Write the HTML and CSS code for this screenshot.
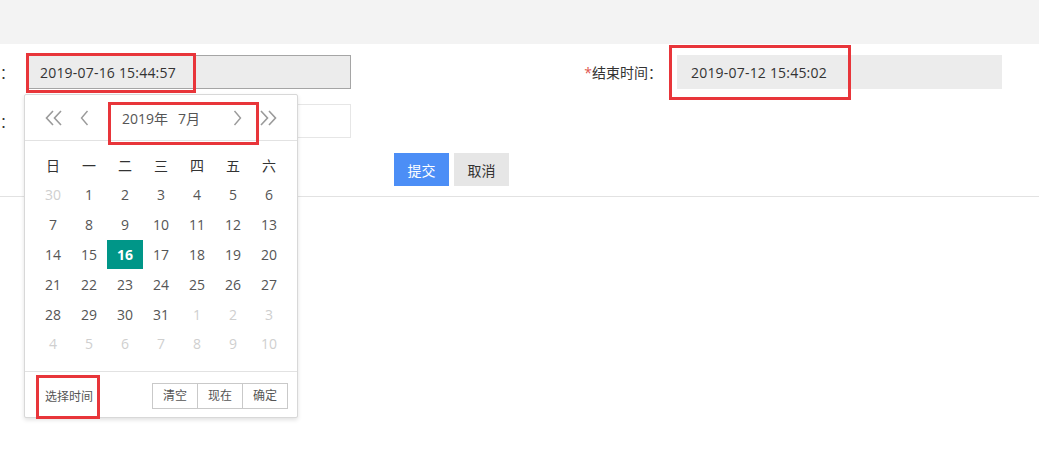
FILE: index.html
```html
<!DOCTYPE html>
<html lang="zh-CN">
<head>
<meta charset="utf-8">
<title>时间选择</title>
<link rel="stylesheet" href="styles.css">
</head>
<body>
<div class="topbar"></div>
<form class="form">
  <div class="row">
    <div class="field">
      <label class="label label-left">：</label>
      <div class="input input-focus">2019-07-16 15:44:57</div>
    </div>
    <div class="field field-right">
      <label class="label label-right"><span class="req">*</span>结束时间：</label>
      <div class="input">2019-07-12 15:45:02</div>
    </div>
  </div>
  <div class="row row2">
    <div class="field">
      <label class="label label-left">：</label>
      <div class="input input-empty"></div>
    </div>
  </div>
  <div class="actions">
    <button type="button" class="btn btn-primary">提交</button>
    <button type="button" class="btn btn-default">取消</button>
  </div>
</form>
<div class="divider"></div>

<div class="laydate">
  <div class="ld-header">
    <div class="ld-group">
      <svg class="ico ico-dbl" width="18" height="16" viewBox="0 0 18 16"><path d="M8 1 L1.5 8 L8 15 M16 1 L9.5 8 L16 15" fill="none" stroke="#9a9a9a" stroke-width="1.6"/></svg>
      <svg class="ico ico-one" width="9" height="16" viewBox="0 0 9 16"><path d="M7.5 1 L1.5 8 L7.5 15" fill="none" stroke="#9a9a9a" stroke-width="1.4"/></svg>
    </div>
    <div class="ld-ym"><span>2019年</span><span>7月</span></div>
    <div class="ld-group">
      <svg class="ico ico-one-r" width="9" height="16" viewBox="0 0 9 16"><path d="M1.5 1 L7.5 8 L1.5 15" fill="none" stroke="#9a9a9a" stroke-width="1.4"/></svg>
      <svg class="ico ico-dbl-r" width="18" height="16" viewBox="0 0 18 16"><path d="M2 1 L8.5 8 L2 15 M10 1 L16.5 8 L10 15" fill="none" stroke="#9a9a9a" stroke-width="1.6"/></svg>
    </div>
  </div>
  <div class="ld-content">
    <table class="ld-table">
      <thead><tr><th>日</th><th>一</th><th>二</th><th>三</th><th>四</th><th>五</th><th>六</th></tr></thead>
      <tbody>
        <tr><td class="other">30</td><td>1</td><td>2</td><td>3</td><td>4</td><td>5</td><td>6</td></tr>
        <tr><td>7</td><td>8</td><td>9</td><td>10</td><td>11</td><td>12</td><td>13</td></tr>
        <tr><td>14</td><td>15</td><td class="this">16</td><td>17</td><td>18</td><td>19</td><td>20</td></tr>
        <tr><td>21</td><td>22</td><td>23</td><td>24</td><td>25</td><td>26</td><td>27</td></tr>
        <tr><td>28</td><td>29</td><td>30</td><td>31</td><td class="other">1</td><td class="other">2</td><td class="other">3</td></tr>
        <tr><td class="other">4</td><td class="other">5</td><td class="other">6</td><td class="other">7</td><td class="other">8</td><td class="other">9</td><td class="other">10</td></tr>
      </tbody>
    </table>
  </div>
  <div class="ld-footer">
    <span class="ld-time">选择时间</span>
    <div class="ld-btns">
      <span class="ld-btn">清空</span><span class="ld-btn">现在</span><span class="ld-btn">确定</span>
    </div>
  </div>
</div>

<div class="mark mark-1"></div>
<div class="mark mark-2"></div>
<div class="mark mark-3"></div>
<div class="mark mark-4"></div>
</body>
</html>
```

FILE: styles.css
```css
* { box-sizing: border-box; }
html, body { margin: 0; padding: 0; background: #fff; overflow: hidden; }
body {
  font-family: "Open Sans", "Noto Sans CJK SC", sans-serif;
  font-size: 14px;
  color: #333;
  position: relative;
  width: 1039px;
  height: 458px;
}
.topbar { height: 44px; background: #f3f3f3; }
.form { padding-top: 11px; }
.row { display: flex; height: 34px; }
.row2 { margin-top: 15px; }
.field { display: flex; height: 34px; }
.field-right { margin-left: 216px; }
.label {
  display: flex;
  align-items: center;
  justify-content: flex-end;
  white-space: nowrap;
  padding-right: 15px;
  color: #333;
}
.label-left { width: 29px; margin-left: -3px; padding-right: 12px; }
.label-right { width: 110px; }
.req { color: #e0564f; }
.input {
  width: 325px;
  height: 34px;
  line-height: 34px;
  padding-left: 13px;
  background: #ececec;
  color: #333;
  letter-spacing: 0.2px;
  border: 1px solid transparent;
}
.input-focus { border-color: #a5a5a5; }
.input-empty { background: #fff; border-color: #e6e6e6; }
.actions { margin-top: 15px; padding-left: 394px; display: flex; gap: 5px; }
.btn {
  font-family: inherit;
  font-size: 14px;
  height: 33px;
  width: 55px;
  border: 0;
  padding: 0;
  margin: 0;
}
.btn-primary { background: #4c8ef6; color: #fff; }
.btn-default { background: #e6e6e6; color: #333; }
.divider { margin-top: 10px; height: 1px; background: #e2e2e2; }

/* laydate popup */
.laydate {
  position: absolute;
  left: 24px;
  top: 94px;
  width: 274px;
  background: #fff;
  border: 1px solid #d8d8d8;
  box-shadow: 0 2px 4px rgba(0,0,0,.12);
  border-radius: 2px;
}
.ld-header {
  height: 46px;
  display: flex;
  align-items: center;
  border-bottom: 1px solid #e2e2e2;
  padding: 0 20px;
}
.ld-group { display: flex; align-items: center; }
.ico { display: block; }
.ico-one { margin-left: 17px; }
.ico-dbl-r { margin-left: 17px; }
.ld-ym { flex: 1; text-align: center; color: #555; font-size: 14px; }
.ld-ym span { margin: 0 5px; }
.ld-content { padding: 9px 10px 12px; }
.ld-table { border-collapse: collapse; border-spacing: 0; width: 252px; table-layout: fixed; }
.ld-table th, .ld-table td {
  width: 36px;
  height: 30px;
  padding: 0;
  text-align: center;
  font-weight: normal;
  font-size: 14px;
}
.ld-table th { color: #333; }
.ld-table td { color: #555; height: 29.8px; }
.ld-table td.other { color: #cfcfcf; }
.ld-table td.this { background: #009688; color: #fff; font-weight: bold; }
.ld-footer {
  height: 46px;
  border-top: 1px solid #e2e2e2;
  display: flex;
  align-items: center;
  justify-content: space-between;
  padding: 3px 9px 0 20px;
}
.ld-time { font-size: 12px; color: #555; }
.ld-btns { display: flex; }
.ld-btn {
  height: 26px;
  line-height: 24px;
  width: 46px;
  text-align: center;
  font-size: 12px;
  color: #555;
  border: 1px solid #c9c9c9;
  margin-left: -1px;
  background: #fff;
}

/* red annotation boxes */
.mark { position: absolute; border: 3px solid #e8353a; }
.mark-1 { left: 26px; top: 53px; width: 170px; height: 40px; }
.mark-2 { left: 108px; top: 102px; width: 151px; height: 43px; }
.mark-3 { left: 669px; top: 45px; width: 182px; height: 55px; }
.mark-4 { left: 36px; top: 375px; width: 64px; height: 44px; }
```
